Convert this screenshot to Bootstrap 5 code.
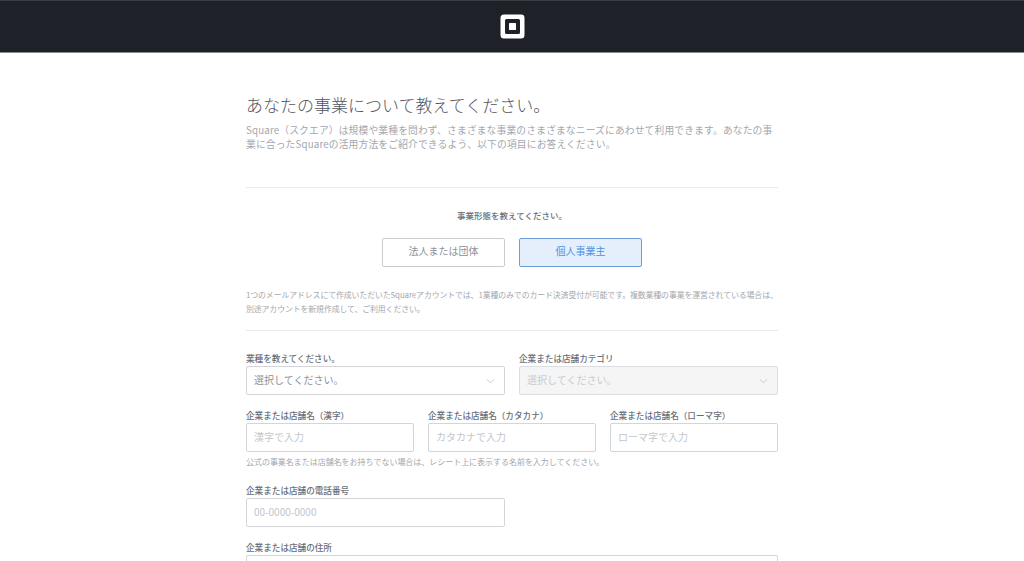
<!DOCTYPE html>
<html lang="ja">
<head>
<meta charset="utf-8">
<title>Square</title>
<link href="https://cdn.jsdelivr.net/npm/bootstrap@5.3.0/dist/css/bootstrap.min.css" rel="stylesheet">
<style>
html,body{height:100%;overflow:hidden}
body{font-family:"Noto Sans CJK JP","Noto Sans","Liberation Sans",sans-serif;color:#4f5660;background:#fff}
.sq-top{height:53px;background:#1e2128;border-top:1px solid #3a3d44;border-bottom:1px solid #8a8c90}
.sq-wrap{width:532px;padding-top:41px}
.sq-title{font-size:17px;line-height:22px;font-weight:300;color:#4f555f;margin:0 0 7px}
.sq-lead{font-size:9.75px;line-height:14px;color:#a3a7ae;margin:0;letter-spacing:.016em}
.sq-rule{border:0;border-top:1px solid #e9eaec;opacity:1;margin:0}
.sq-r1{margin-top:36px}
.sq-ask{font-size:8.5px;line-height:12px;font-weight:500;color:#666c76;text-align:center;margin:21px 0 17px}
.sq-choice{width:123px;height:29px;padding:0 0 3px;font-size:10px;line-height:24px;border-radius:2px;border:1px solid #c9ccd0;color:#8d9199;background:#fff}
.sq-choice.sq-on{background:#e5effb;border-color:#6a9fdc;color:#4d92e2}
.sq-row1{gap:14px}
.sq-note{font-size:7.9px;line-height:14px;color:#a3a7ae;margin:21px 0 14px;letter-spacing:-.1px}
.sq-form{padding-top:21px}
.sq-lab{display:block;font-size:8.6px;line-height:12px;font-weight:500;color:#686e78;margin:0 0 2px}
.sq-gap{--bs-gutter-x:14px;--bs-gutter-y:0}
.sq-ctl,.sq-ctl.form-select{height:29px;min-height:0;padding:0 7px 2px;font-size:10px;line-height:25px;border:1px solid #d3d5d9;border-radius:2px;color:#8d9199;box-shadow:none}
.sq-ctl::placeholder{color:#c3c6cb;opacity:1}
.sq-ctl.form-select{background-image:url("data:image/svg+xml,%3csvg xmlns='http://www.w3.org/2000/svg' viewBox='0 0 10 6'%3e%3cpath fill='none' stroke='%23a9adb3' stroke-width='.7' d='M1 1l4 4 4-4'/%3e%3c/svg%3e");background-position:right 9px center;background-size:9px 6px}
.sq-ctl.form-select:disabled{background-color:#f5f5f6;color:#c8cbcf;border-color:#dcdee1}
.sq-row2{margin-top:14px}
.sq-help{font-size:8px;line-height:12px;color:#a3a7ae;margin:4px 0 0;letter-spacing:-.004em}
.sq-half{width:259px}
.sq-row3{margin-top:16px}
.sq-row4{margin-top:14px}
</style>
</head>
<body>
<header class="sq-top d-flex align-items-center justify-content-center">
<svg width="25" height="25" viewBox="0 0 25 25" aria-label="Square">
<path fill="#fff" fill-rule="evenodd" d="M4 .5h17a3.500 3.500 0 0 1 3.500 3.500v17a3.500 3.500 0 0 1-3.500 3.500H4A3.500 3.500 0 0 1 .5 21V4A3.500 3.500 0 0 1 4 .5zM6.500 5a1.500 1.500 0 0 0-1.500 1.500v12A1.500 1.500 0 0 0 6.500 20h12a1.500 1.500 0 0 0 1.500-1.500v-12A1.500 1.500 0 0 0 18.500 5z"/>
<rect x="9" y="9" width="7" height="7" rx=".6" fill="#fff"/>
</svg>
</header>
<main class="sq-wrap mx-auto">
<h1 class="sq-title">あなたの事業について教えてください。</h1>
<p class="sq-lead">Square（スクエア）は規模や業種を問わず、さまざまな事業のさまざまなニーズにあわせて利用できます。あなたの事業に合ったSquareの活用方法をご紹介できるよう、以下の項目にお答えください。</p>
<hr class="sq-rule sq-r1">
<p class="sq-ask">事業形態を教えてください。</p>
<div class="d-flex justify-content-center sq-row1">
<button type="button" class="btn sq-choice">法人または団体</button>
<button type="button" class="btn sq-choice sq-on">個人事業主</button>
</div>
<p class="sq-note">1つのメールアドレスにて作成いただいたSquareアカウントでは、1業種のみでのカード決済受付が可能です。複数業種の事業を運営されている場合は、別途アカウントを新規作成して、ご利用ください。</p>
<hr class="sq-rule">
<form class="sq-form">
<div class="row sq-gap">
<div class="col-6"><label class="sq-lab">業種を教えてください。</label>
<select class="form-select sq-ctl"><option>選択してください。</option></select></div>
<div class="col-6"><label class="sq-lab">企業または店舗カテゴリ</label>
<select class="form-select sq-ctl" disabled><option>選択してください。</option></select></div>
</div>
<div class="row sq-gap sq-row2">
<div class="col-4"><label class="sq-lab">企業または店舗名（漢字）</label><input class="form-control sq-ctl" placeholder="漢字で入力"></div>
<div class="col-4"><label class="sq-lab">企業または店舗名（カタカナ）</label><input class="form-control sq-ctl" placeholder="カタカナで入力"></div>
<div class="col-4"><label class="sq-lab">企業または店舗名（ローマ字）</label><input class="form-control sq-ctl" placeholder="ローマ字で入力"></div>
</div>
<p class="sq-help">公式の事業名または店舗名をお持ちでない場合は、レシート上に表示する名前を入力してください。</p>
<div class="sq-half sq-row3"><label class="sq-lab">企業または店舗の電話番号</label><input class="form-control sq-ctl" placeholder="00-0000-0000"></div>
<div class="sq-row4"><label class="sq-lab">企業または店舗の住所</label><input class="form-control sq-ctl"></div>
</form>
</main>
<script src="https://cdn.jsdelivr.net/npm/bootstrap@5.3.0/dist/js/bootstrap.bundle.min.js"></script>
</body>
</html>
